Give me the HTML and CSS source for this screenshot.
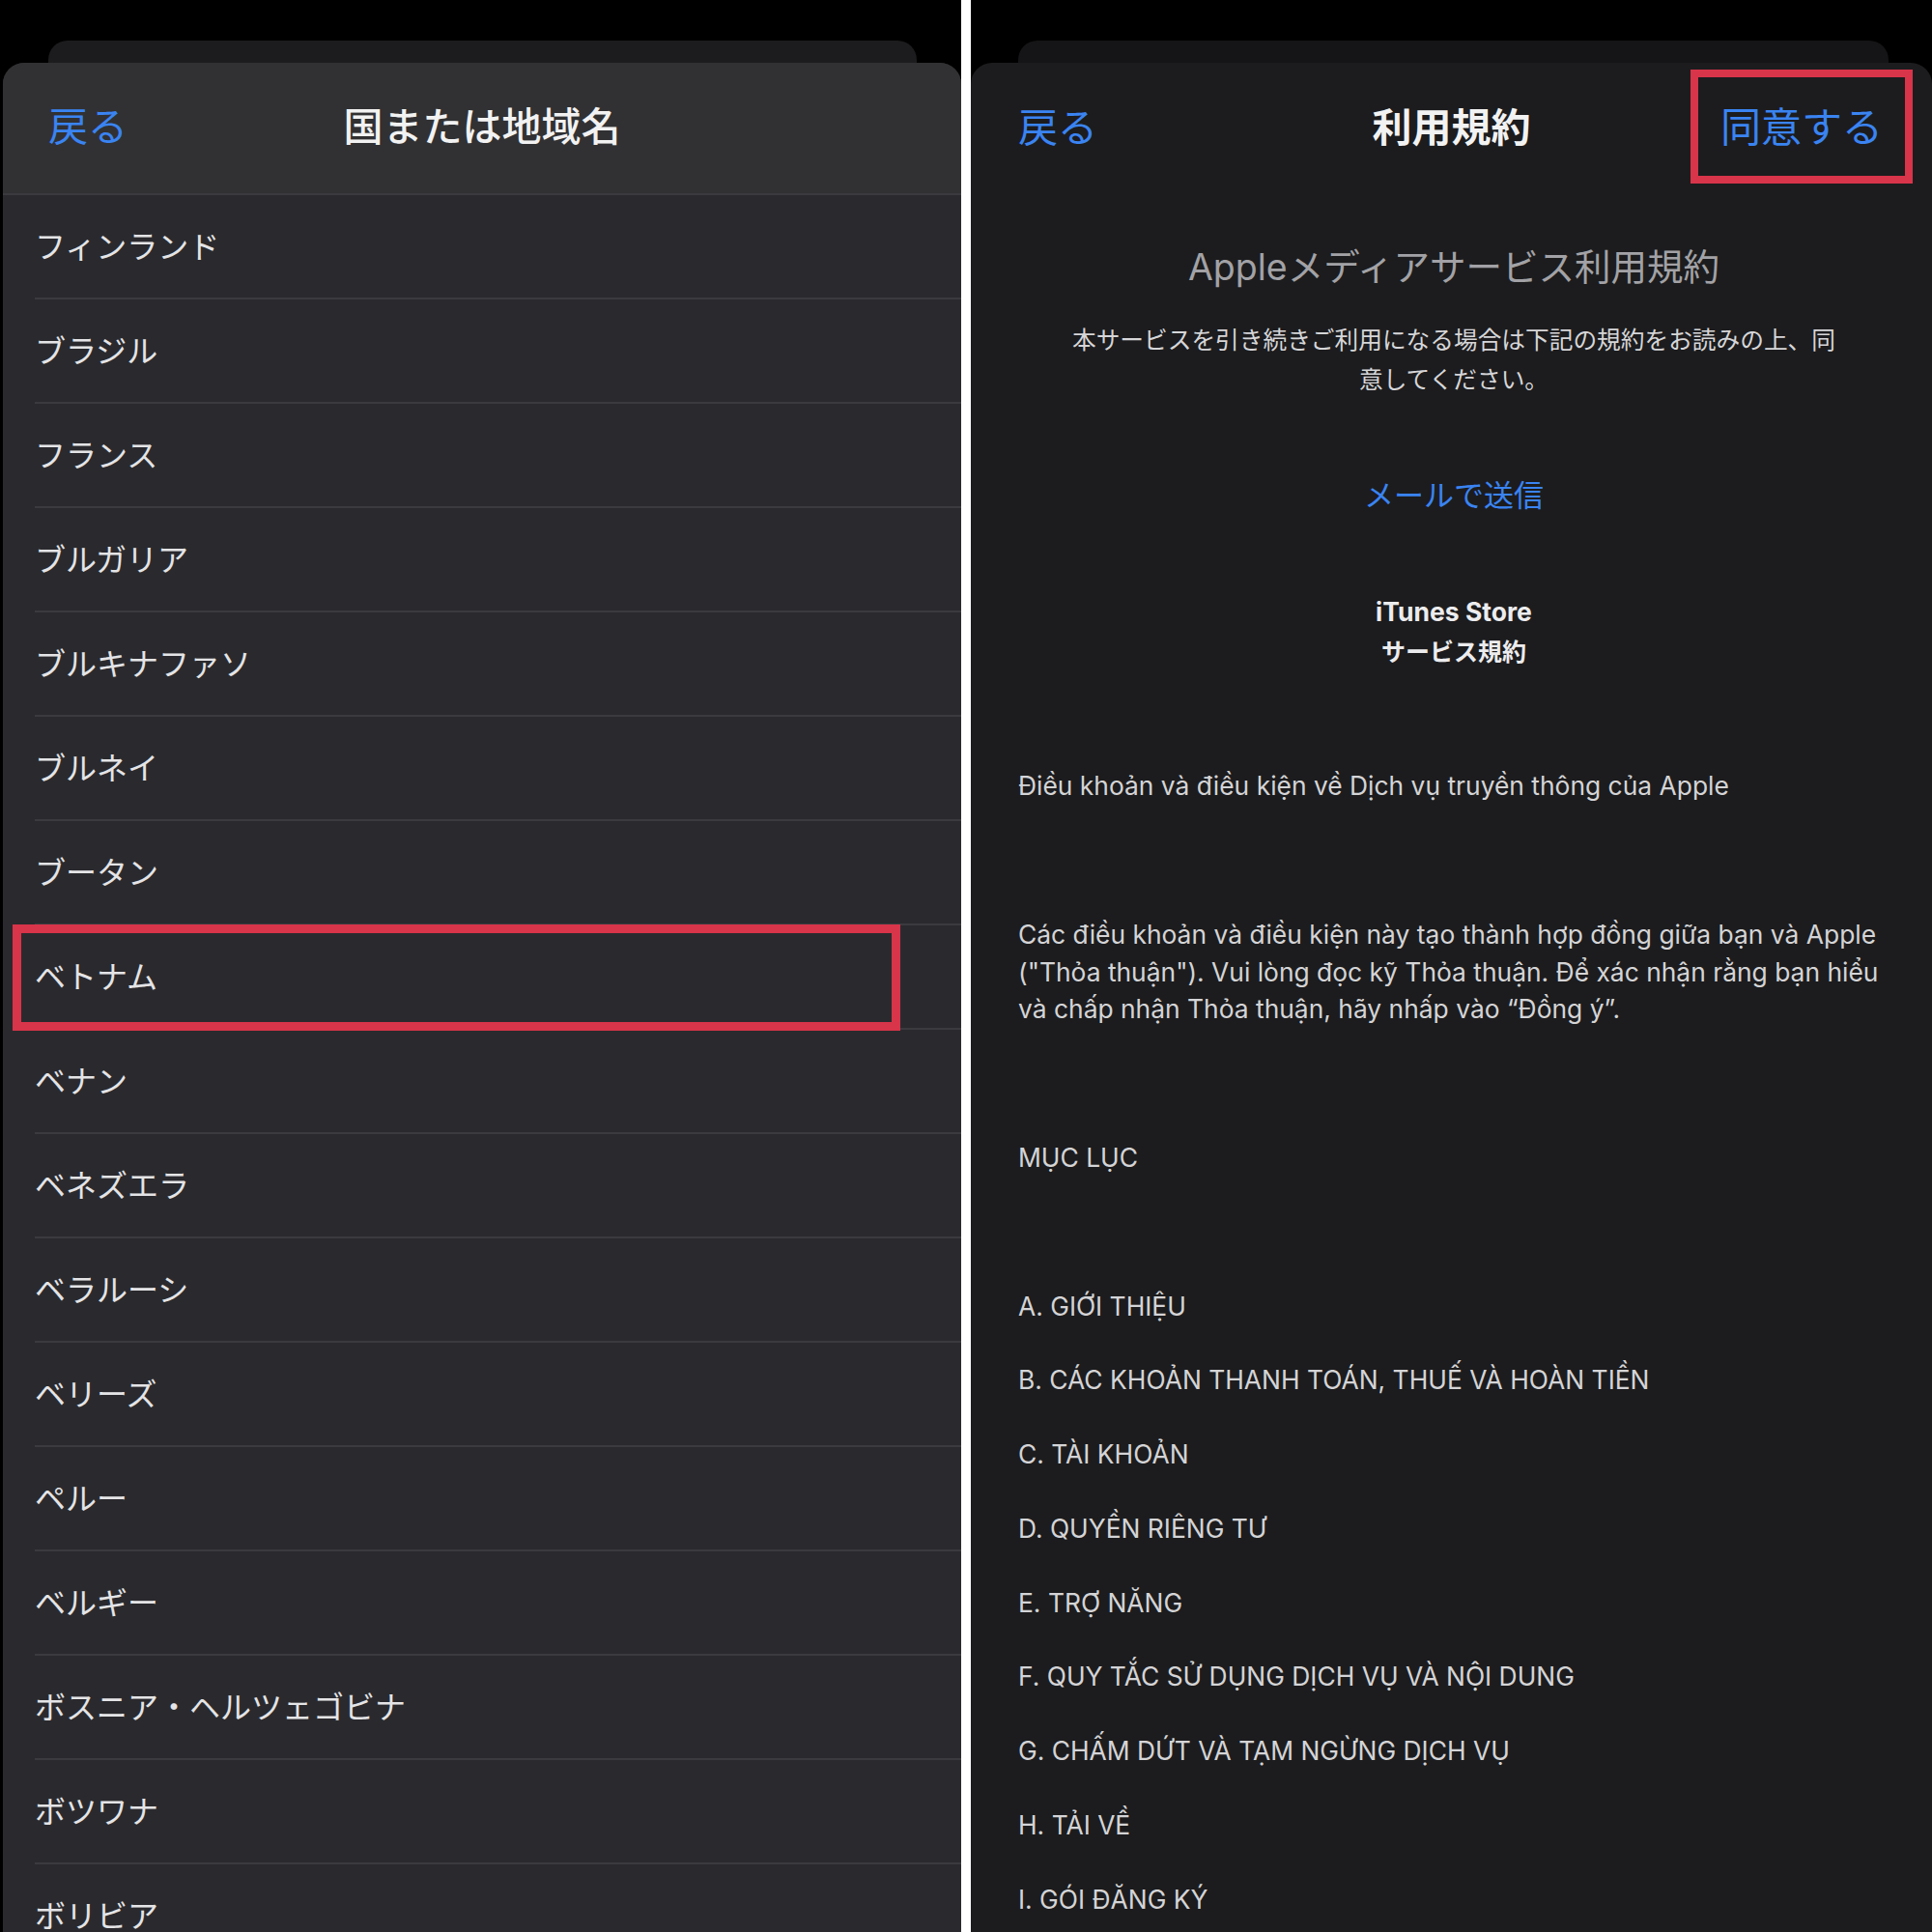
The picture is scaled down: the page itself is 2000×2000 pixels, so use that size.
FILE: index.html
```html
<!DOCTYPE html>
<html lang="ja">
<head>
    <meta charset="UTF-8">
    <meta name="viewport" content="width=device-width, initial-scale=1.0">
    <title>国または地域名 / 利用規約</title>
    <link rel="stylesheet" href="styles.css">
</head>
<body>
    <div class="screens">
        <!-- Country picker -->
        <section class="panel panel-left">
            <div class="back-card"></div>
            <div class="sheet">
                <header class="nav-bar">
                    <span class="nav-back">戻る</span>
                    <h1 class="nav-title">国または地域名</h1>
                    <span></span>
                </header>
                <ul class="country-list">
                    <li class="country">フィンランド</li>
                    <li class="country">ブラジル</li>
                    <li class="country">フランス</li>
                    <li class="country">ブルガリア</li>
                    <li class="country">ブルキナファソ</li>
                    <li class="country">ブルネイ</li>
                    <li class="country">ブータン</li>
                    <li class="country marked">ベトナム</li>
                    <li class="country">ベナン</li>
                    <li class="country">ベネズエラ</li>
                    <li class="country">ベラルーシ</li>
                    <li class="country">ベリーズ</li>
                    <li class="country">ペルー</li>
                    <li class="country">ベルギー</li>
                    <li class="country">ボスニア・ヘルツェゴビナ</li>
                    <li class="country">ボツワナ</li>
                    <li class="country">ボリビア</li>
                </ul>
            </div>
        </section>

        <!-- Terms of service -->
        <section class="panel panel-right">
            <div class="back-card"></div>
            <div class="sheet">
                <header class="nav-bar">
                    <span class="nav-back">戻る</span>
                    <h1 class="nav-title bold">利用規約</h1>
                    <span class="nav-agree">同意する</span>
                </header>
                <div class="terms">
                    <h2 class="terms-title">Appleメディアサービス利用規約</h2>
                    <p class="terms-intro">本サービスを引き続きご利用になる場合は下記の規約をお読みの上、同意してください。</p>
                    <div class="terms-mail">メールで送信</div>
                    <div class="terms-store"><span class="store-name">iTunes Store</span><br>サービス規約</div>
                    <p class="terms-lead">Điều khoản và điều kiện về Dịch vụ truyền thông của Apple</p>
                    <p class="terms-body">Các điều khoản và điều kiện này tạo thành hợp đồng giữa bạn và Apple ("Thỏa thuận"). Vui lòng đọc kỹ Thỏa thuận. Để xác nhận rằng bạn hiểu và chấp nhận Thỏa thuận, hãy nhấp vào “Đồng ý”.</p>
                    <p class="terms-toc">MỤC LỤC</p>
                    <ul class="toc-list">
                        <li>A. GIỚI THIỆU</li>
                        <li>B. CÁC KHOẢN THANH TOÁN, THUẾ VÀ HOÀN TIỀN</li>
                        <li>C. TÀI KHOẢN</li>
                        <li>D. QUYỀN RIÊNG TƯ</li>
                        <li>E. TRỢ NĂNG</li>
                        <li>F. QUY TẮC SỬ DỤNG DỊCH VỤ VÀ NỘI DUNG</li>
                        <li>G. CHẤM DỨT VÀ TẠM NGỪNG DỊCH VỤ</li>
                        <li>H. TẢI VỀ</li>
                        <li>I. GÓI ĐĂNG KÝ</li>
                    </ul>
                </div>
            </div>
        </section>
    </div>
</body>
</html>
```

FILE: styles.css
```css
:root {
    --blue: #3a84f2;
    --mark: #d8344a;
    --left-header: #313133;
    --left-list: #2a2a2e;
    --left-line: #3b3b3f;
    --right-bg: #1c1c1e;
}

* {
    box-sizing: border-box;
    margin: 0;
    padding: 0;
}

body {
    background-color: #ffffff;
    font-family: Inter, "Noto Sans CJK JP", sans-serif;
    width: 2000px;
    height: 2000px;
    overflow: hidden;
}

.screens {
    display: flex;
    gap: 10px;
    height: 2000px;
}

.panel {
    width: 995px;
    height: 2000px;
    background-color: #000000;
    display: flex;
    flex-direction: column;
    overflow: hidden;
}

.back-card {
    height: 23px;
    margin-top: 42px;
    border-radius: 20px 20px 0 0;
    flex-shrink: 0;
}

.sheet {
    flex: 1;
    border-radius: 22px 22px 0 0;
    overflow: hidden;
}

.nav-bar {
    display: grid;
    grid-template-columns: 1fr auto 1fr;
    align-items: center;
    height: 137px;
    padding-bottom: 10px;
    font-family: "Noto Sans CJK JP", sans-serif;
}

.nav-back {
    color: var(--blue);
    font-size: 41px;
    justify-self: start;
}

.nav-title {
    color: #f2f2f2;
    font-size: 41px;
    font-weight: 500;
}

.nav-title.bold {
    font-weight: 700;
}

.nav-agree {
    justify-self: end;
    color: var(--blue);
    font-size: 42px;
    height: 118px;
    margin-top: 4px;
    padding: 0 23px 4px;
    border: 8px solid var(--mark);
    display: flex;
    align-items: center;
}

/* left screen */

.panel-left .back-card {
    margin-left: 50px;
    margin-right: 46px;
    background-color: #1c1c1e;
}

.panel-left .sheet {
    margin-left: 3px;
    background-color: var(--left-list);
}

.panel-left .nav-bar {
    padding-left: 47px;
    padding-right: 47px;
    background-color: var(--left-header);
    border-bottom: 2px solid var(--left-line);
}

.country-list {
    list-style: none;
}

.country {
    height: 108px;
    margin-left: 33px;
    padding-bottom: 4px;
    border-bottom: 2px solid var(--left-line);
    display: flex;
    align-items: center;
    font-family: "Noto Sans CJK JP", sans-serif;
    font-size: 32px;
    color: #e4e4e6;
    position: relative;
}

.country.marked::after {
    content: "";
    position: absolute;
    left: -23px;
    right: 63px;
    top: -1px;
    bottom: -3px;
    border: 9px solid var(--mark);
}

/* right screen */

.panel-right .back-card {
    margin-left: 49px;
    margin-right: 45px;
    background-color: #151517;
}

.panel-right .sheet {
    background-color: var(--right-bg);
}

.panel-right .nav-bar {
    padding-left: 20px;
    padding-right: 20px;
}

.panel-right .nav-back {
    margin-left: 29px;
}

.terms {
    padding: 51px 44px 0 49px;
    color: #d4d4d6;
}

.terms-title {
    text-align: center;
    font-size: 37.5px;
    line-height: 48px;
    font-weight: 400;
    color: #a2a2a6;
    font-family: Inter, "Noto Sans CJK JP", sans-serif;
}

.terms-intro {
    max-width: 800px;
    margin: 29px auto 0;
    text-align: center;
    font-family: "Noto Sans CJK JP", sans-serif;
    font-size: 24.7px;
    line-height: 41px;
    color: #d6d6d8;
}

.terms-mail {
    margin-top: 79px;
    text-align: center;
    font-family: "Noto Sans CJK JP", sans-serif;
    font-size: 31px;
    line-height: 40px;
    color: var(--blue);
}

.terms-store {
    margin-top: 82px;
    text-align: center;
    font-family: Inter, "Noto Sans CJK JP", sans-serif;
    font-size: 25px;
    line-height: 41px;
    font-weight: 700;
    color: #ececee;
}

.store-name {
    font-size: 26.5px;
}

.terms-lead {
    margin-top: 98px;
    font-size: 26.4px;
    line-height: 38px;
}

.terms-body {
    margin-top: 116px;
    font-size: 26.4px;
    line-height: 38.5px;
}

.terms-toc {
    margin-top: 115px;
    font-size: 26.4px;
    line-height: 38px;
}

.toc-list {
    list-style: none;
    margin-top: 116px;
    display: flex;
    flex-direction: column;
    gap: 38.75px;
    font-size: 26.4px;
    line-height: 38px;
}
```
